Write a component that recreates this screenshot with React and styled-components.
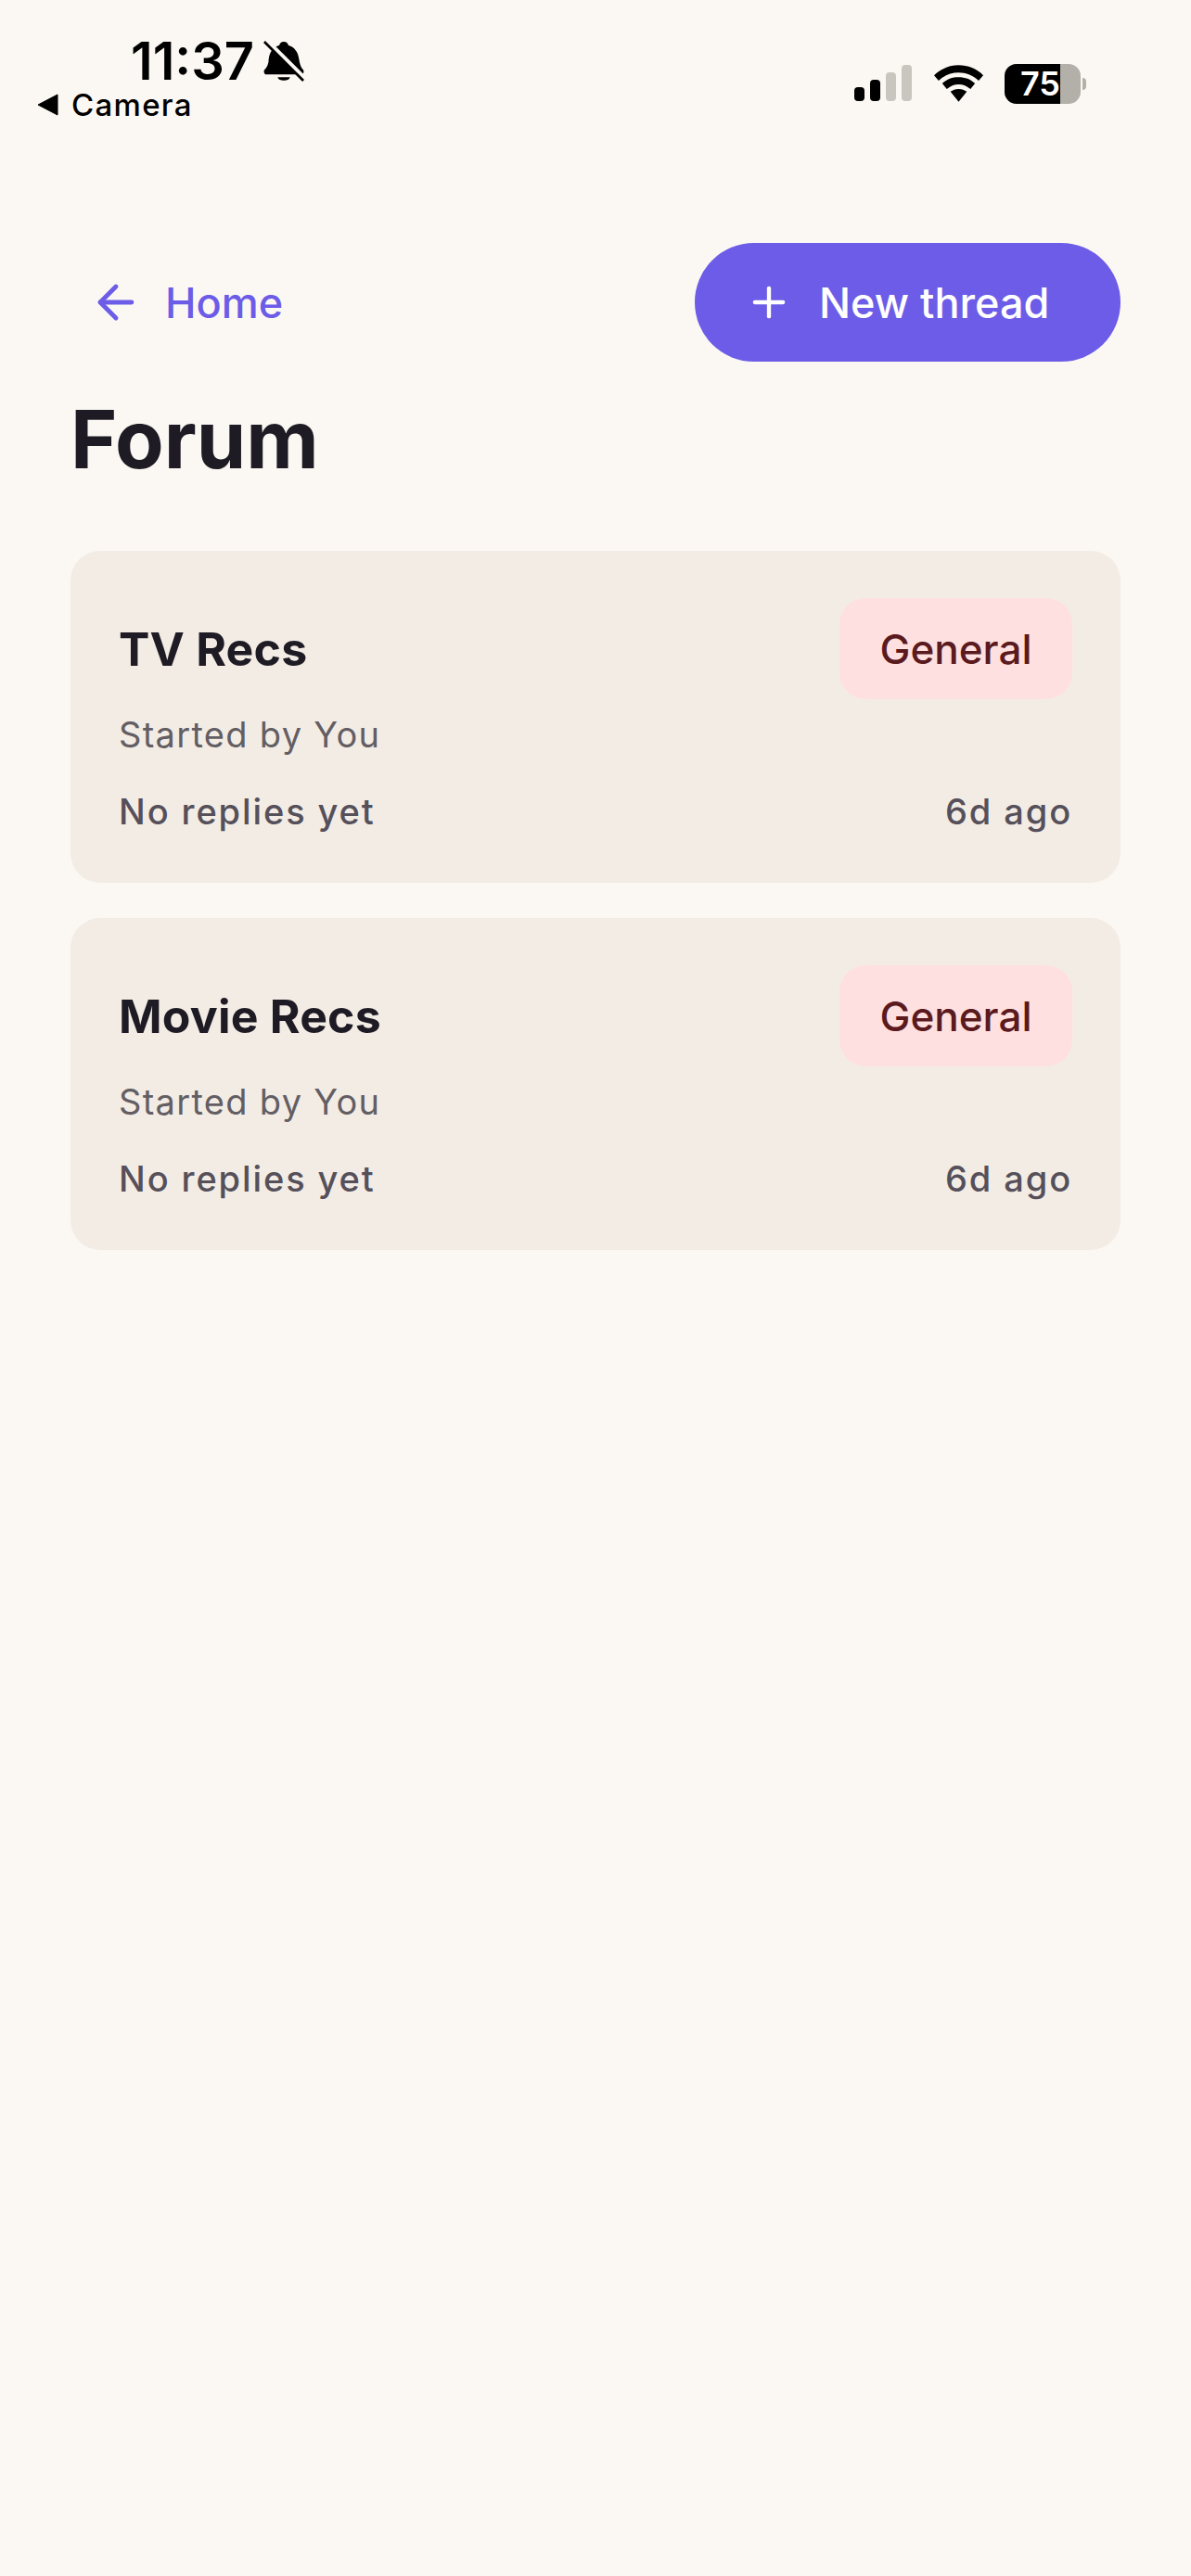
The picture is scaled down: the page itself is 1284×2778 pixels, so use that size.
import styled, { createGlobalStyle } from "styled-components"
import { ArrowLeft, Plus } from "lucide-react"

const GlobalStyle = createGlobalStyle`
  html, body {
    margin: 0;
    padding: 0;
    background: #fbf8f3;
  }
  * {
    box-sizing: border-box;
  }
`

const threads = [
  { id: 1, title: "TV Recs" },
  { id: 2, title: "Movie Recs" },
]

const Page = styled.div`
  width: 1284px;
  height: 2778px;
  background: #fbf8f3;
  font-family: Inter, "Liberation Sans", sans-serif;
  overflow: hidden;
`

const StatusBar = styled.div`
  display: flex;
  justify-content: space-between;
  height: 148px;
  padding: 36px 0 0 40px;
`

const StatusLeft = styled.div`
  display: flex;
  flex-direction: column;
  align-items: flex-start;
`

const TimeRow = styled.div`
  display: flex;
  align-items: center;
  gap: 10px;
  margin-left: 101px;
  height: 60px;
`

const Time = styled.span`
  font-size: 56px;
  line-height: 60px;
  font-weight: 600;
  color: #000;
`

const BackRow = styled.div`
  display: flex;
  align-items: center;
  gap: 13px;
  height: 36px;
  margin-top: -1px;
`

const BackLabel = styled.span`
  font-size: 33px;
  line-height: 36px;
  font-weight: 500;
  letter-spacing: 1.3px;
  color: #000;
`

const StatusRight = styled.div`
  display: flex;
  align-items: center;
  height: 60px;
  margin: 24px 113px 0 0;
`

const Battery = styled.div`
  display: flex;
  width: 82px;
  height: 43px;
  margin-left: 23px;
  border-radius: 13px;
  overflow: hidden;
  background: #b3afa9;
`

const BatteryFill = styled.div`
  width: 60px;
  height: 100%;
  overflow: hidden;
  background: #000;
  color: #fff;
  font-size: 36px;
  line-height: 43px;
  font-weight: 600;
  text-align: right;
  white-space: nowrap;
`

const BatteryCap = styled.div`
  width: 4px;
  height: 13px;
  margin-left: 2px;
  background: #b3afa9;
  border-radius: 0 6px 6px 0;
`

const Content = styled.div`
  padding: 114px 76px 0;
`

const TopBar = styled.div`
  display: flex;
  justify-content: space-between;
  align-items: center;
  height: 128px;
`

const BackLink = styled.a`
  display: flex;
  align-items: center;
  gap: 24px;
  padding-left: 20px;
  color: #6c5ce7;
  font-size: 45px;
  font-weight: 500;
`

const NewButton = styled.button`
  display: flex;
  align-items: center;
  gap: 28px;
  height: 128px;
  width: 459px;
  padding: 0 0 0 54px;
  border: none;
  border-radius: 64px;
  background: #6c5ce7;
  color: #fff;
  font-family: inherit;
  font-size: 45px;
  font-weight: 500;
`

const Title = styled.h1`
  margin: 34px 0 0;
  font-size: 86px;
  line-height: 100px;
  font-weight: 700;
  color: #1e1b24;
`

const ThreadList = styled.div`
  display: flex;
  flex-direction: column;
  gap: 38px;
  margin-top: 70px;
`

const Card = styled.div`
  height: 358px;
  padding: 51px 52px 0;
  border-radius: 32px;
  background: #f3ece5;
`

const CardHead = styled.div`
  display: flex;
  justify-content: space-between;
  align-items: center;
  height: 109px;
`

const ThreadTitle = styled.h2`
  margin: 0;
  font-size: 50px;
  font-weight: 700;
  letter-spacing: 0.2px;
  color: #1e1b24;
`

const Tag = styled.span`
  display: flex;
  align-items: center;
  justify-content: center;
  width: 251px;
  height: 109px;
  border-radius: 28px;
  background: #ffe0e0;
  color: #5a1a1e;
  font-size: 44px;
  font-weight: 500;
`

const Starter = styled.div`
  margin-top: 15px;
  font-size: 38px;
  line-height: 46px;
  letter-spacing: 1.3px;
  color: #635e63;
`

const CardFoot = styled.div`
  display: flex;
  justify-content: space-between;
  margin-top: 37px;
  font-size: 38px;
  line-height: 46px;
  font-weight: 450;
  letter-spacing: 1.9px;
  color: #55505a;
`

const BellOff = () => (
  <svg width="44" height="44" viewBox="0 0 46 46">
    <path d="M23 1c3 0 5 2 5 4 7 2 11 8 12 15 1 6 2 10 5 13 1 2 0 5-2 5H3c-2 0-3-3-2-5 3-3 5-7 5-13 1-7 5-13 12-15 0-2 2-4 5-4z" fill="#000" />
    <path d="M16 41h14c-1 5-13 5-14 0z" fill="#000" />
    <path d="M4 0 47 43" stroke="#fbf8f3" strokeWidth="5" />
    <path d="M1 1 45 45" stroke="#000" strokeWidth="2.8" />
  </svg>
)

const BackTriangle = () => (
  <svg width="24" height="24" viewBox="0 0 24 24">
    <path d="M22 1v22L1 12z" fill="#000" stroke="#000" strokeLinejoin="round" />
  </svg>
)

const Signal = () => (
  <svg width="62" height="40" viewBox="0 0 62 40">
    <rect x="0" y="24" width="11" height="15" rx="4" fill="#000" />
    <rect x="17" y="16" width="11" height="23" rx="4" fill="#000" />
    <rect x="34" y="8" width="11" height="31" rx="4" fill="#c9c6c0" />
    <rect x="51" y="0" width="11" height="39" rx="4" fill="#c9c6c0" />
  </svg>
)

const WifiIcon = styled.svg`
  margin-left: 24px;
`

const Wifi = () => (
  <WifiIcon width="53" height="40" viewBox="0 0 54 40">
    <path d="M27 0c10 0 20 4 27 11l-5 6C43 11 35 8 27 8S11 11 5 17l-5-6C7 4 17 0 27 0z" fill="#000" />
    <path d="M27 13c7 0 13 2 18 7l-5 6c-4-3-8-5-13-5s-9 2-13 5l-5-6c5-5 11-7 18-7z" fill="#000" />
    <path d="M27 26c4 0 6 1 9 3L27 40l-9-11c3-2 5-3 9-3z" fill="#000" />
  </WifiIcon>
)

const ThreadCard = ({ title }) => (
  <Card>
    <CardHead>
      <ThreadTitle>{title}</ThreadTitle>
      <Tag>General</Tag>
    </CardHead>
    <Starter>Started by You</Starter>
    <CardFoot>
      <span>No replies yet</span>
      <span>6d ago</span>
    </CardFoot>
  </Card>
)

const App = () => (
  <Page>
    <GlobalStyle />
    <StatusBar>
      <StatusLeft>
        <TimeRow>
          <Time>11:37</Time>
          <BellOff />
        </TimeRow>
        <BackRow>
          <BackTriangle />
          <BackLabel>Camera</BackLabel>
        </BackRow>
      </StatusLeft>
      <StatusRight>
        <Signal />
        <Wifi />
        <Battery>
          <BatteryFill>75</BatteryFill>
        </Battery>
        <BatteryCap />
      </StatusRight>
    </StatusBar>
    <Content>
      <TopBar>
        <BackLink>
          <ArrowLeft size={58} strokeWidth={2} />
          Home
        </BackLink>
        <NewButton>
          <Plus size={52} strokeWidth={2} />
          New thread
        </NewButton>
      </TopBar>
      <Title>Forum</Title>
      <ThreadList>
        {threads.map((thread) => (
          <ThreadCard key={thread.id} title={thread.title} />
        ))}
      </ThreadList>
    </Content>
  </Page>
)

export default App
